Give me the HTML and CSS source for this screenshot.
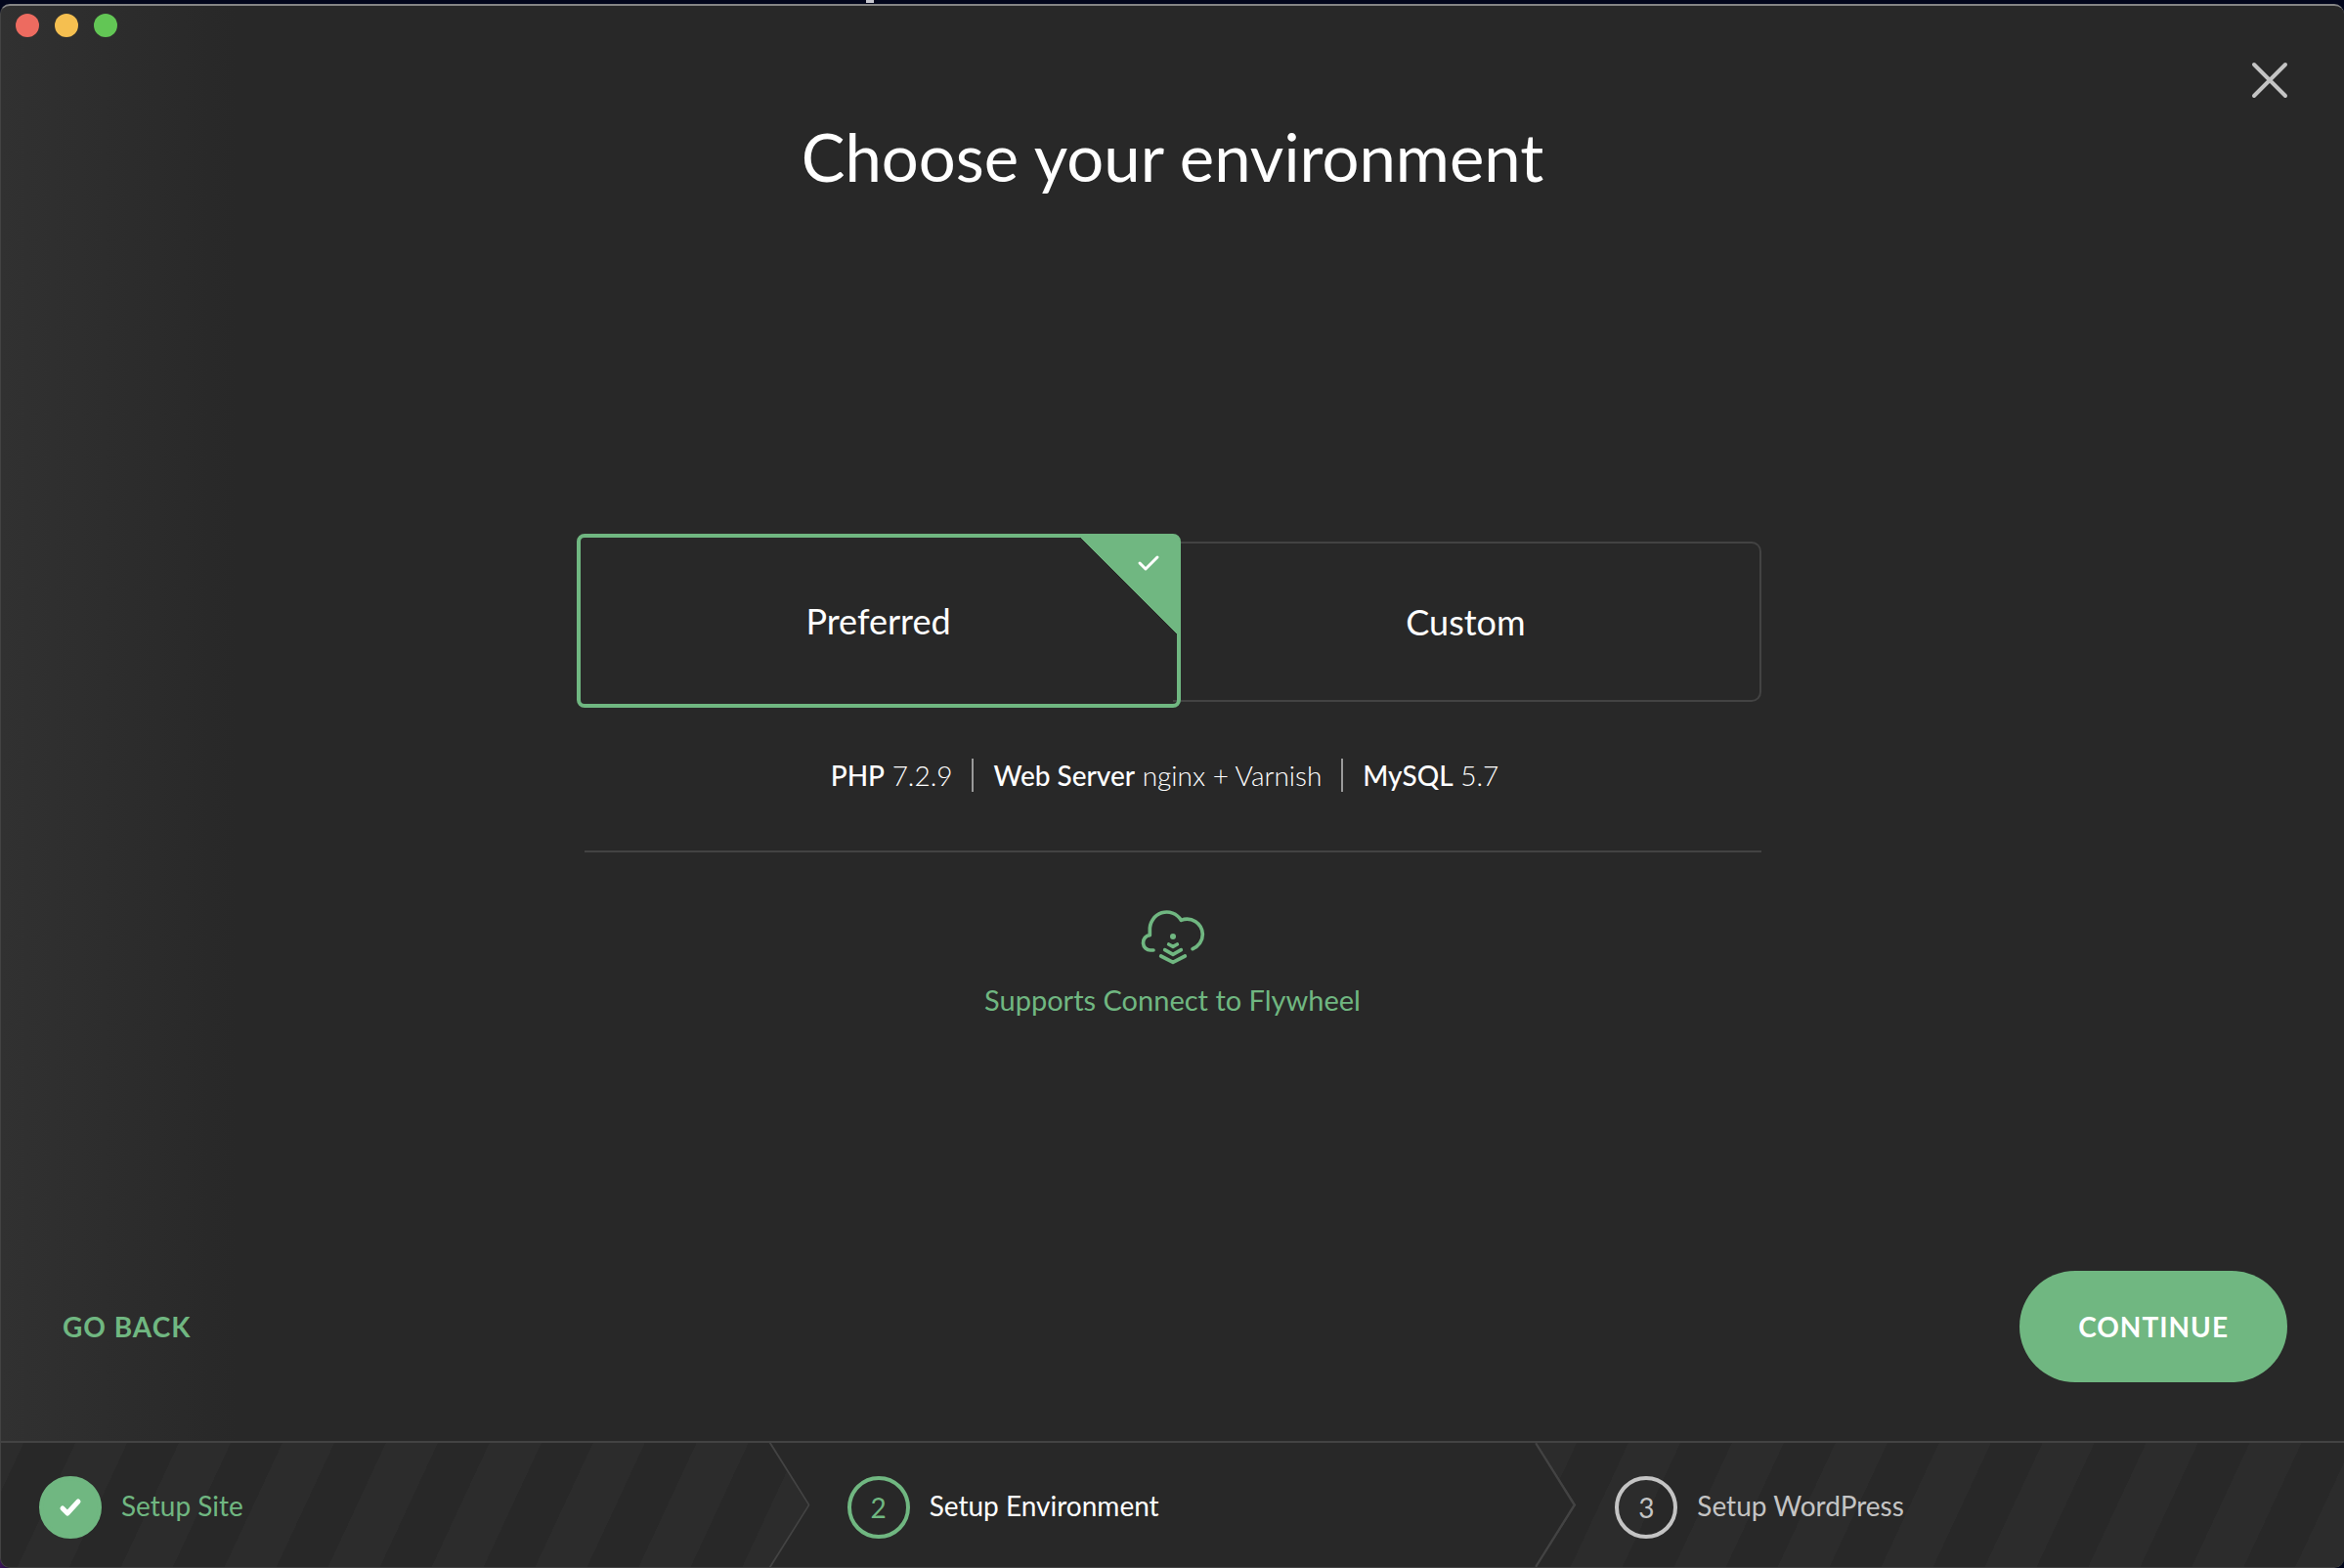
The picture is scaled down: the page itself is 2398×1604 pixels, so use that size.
FILE: index.html
```html
<!DOCTYPE html>
<html lang="en">
<head>
<meta charset="utf-8">
<meta name="viewport" content="width=device-width, initial-scale=1">
<title>Choose your environment</title>
<link rel="stylesheet" href="styles.css">
</head>
<body>
<div class="window">
  <header class="titlebar">
    <div class="lights">
      <button class="light light-close" type="button" aria-label="Close window"></button>
      <button class="light light-minimize" type="button" aria-label="Minimize window"></button>
      <button class="light light-zoom" type="button" aria-label="Zoom window"></button>
    </div>
    <button class="dismiss" type="button" aria-label="Close">
      <svg viewBox="0 0 36 36" width="36" height="36" aria-hidden="true"><path d="M2 2L34 34M34 2L2 34"/></svg>
    </button>
  </header>

  <h1 class="title">Choose your environment</h1>

  <main class="content">
    <form class="choices">
      <label class="choice choice-selected">
        <input class="choice-input" type="radio" name="environment" value="preferred" checked>
        <span>Preferred</span>
        <span class="flag">
          <svg viewBox="0 0 22 16" width="22" height="16" aria-hidden="true"><path d="M2 8L8 14L20 2"/></svg>
        </span>
      </label>
      <label class="choice">
        <input class="choice-input" type="radio" name="environment" value="custom">
        <span>Custom</span>
      </label>
    </form>

    <ul class="specs">
      <li><strong>PHP</strong> 7.2.9</li>
      <li><strong>Web Server</strong> nginx + Varnish</li>
      <li><strong>MySQL</strong> 5.7</li>
    </ul>

    <div class="support">
      <svg class="cloud" viewBox="0 0 192 162" width="64" height="54" aria-hidden="true">
        <path d="M36 120H28A22 23 0 0 1 25 74V59A52 53 0 0 1 121 28A48 48 0 0 1 187 71A48 48 0 0 1 156 116"/>
        <path d="M83 102L96 109L109 102M71 119L96 133L121 119M59 138L96 157L133 138"/>
        <circle cx="96" cy="78" r="9"/>
      </svg>
      <span>Supports Connect to Flywheel</span>
    </div>
  </main>

  <div class="actions">
    <button class="back" type="button">GO BACK</button>
    <button class="continue" type="button">CONTINUE</button>
  </div>

  <ol class="stepper">
    <li class="step step-done">
      <span class="badge">
        <svg viewBox="0 0 20 16" width="20" height="16" aria-hidden="true"><path d="M2 9L7 14L18 2"/></svg>
      </span>
      <span class="step-label">Setup Site</span>
    </li>
    <li class="step step-current">
      <span class="badge">2</span>
      <span class="step-label">Setup Environment</span>
      <svg class="chevron chevron-start" viewBox="0 0 41 128" aria-hidden="true"><path d="M0 0L40 64L0 128"/></svg>
      <svg class="chevron chevron-end" viewBox="0 0 41 128" aria-hidden="true"><path d="M0 0L40 64L0 128"/></svg>
    </li>
    <li class="step">
      <span class="badge">3</span>
      <span class="step-label">Setup WordPress</span>
    </li>
  </ol>
</div>
</body>
</html>
```
FILE: styles.css
```css
:root {
  --bg: #282828;
  --stripe: #2c2c2c;
  --line: #434343;
  --green: #70b781;
  --muted: #c4c4c4;
}

* {
  box-sizing: border-box;
}

body {
  margin: 0;
  padding-top: 4px;
  min-height: 100vh;
  display: flex;
  /* sliver of the desktop behind the window */
  background:
    linear-gradient(#c8c8d0, #c8c8d0) 886px 0 / 8px 3px no-repeat,
    linear-gradient(90deg, #3a1458, #02061c 20px) 0 100% / 100% 40px no-repeat,
    #02061c;
  color: #fff;
  font: 28px/34px Lato, "Open Sans", sans-serif;
}

button {
  margin: 0;
  padding: 0;
  border: 0;
  background: none;
  color: inherit;
  font: inherit;
  letter-spacing: inherit;
  cursor: pointer;
}

svg {
  display: block;
  overflow: visible;
  fill: none;
  stroke: currentColor;
  stroke-linecap: round;
  stroke-linejoin: round;
}

ul,
ol {
  margin: 0;
  padding: 0;
  list-style: none;
}

.window {
  flex: 1;
  display: flex;
  flex-direction: column;
  overflow: hidden;
  border: 1px solid var(--line);
  border-top: 2px solid #858585;
  border-right: 0;
  border-radius: 10px;
  background: linear-gradient(90deg, #313131, var(--bg) 240px);
}

.titlebar {
  display: flex;
  justify-content: space-between;
  padding: 8px 58px 0 15px;
}

.lights {
  display: flex;
  gap: 16px;
}

.light {
  width: 24px;
  height: 24px;
  border-radius: 50%;
}

.light-close {
  background: #ed6b60;
}

.light-minimize {
  background: #f5bf50;
}

.light-zoom {
  background: #62c655;
}

.dismiss {
  margin-top: 50px;
  color: var(--muted);
}

.dismiss svg {
  stroke-width: 4;
}

.title {
  margin: 22px 0 96px;
  font-size: 67px;
  font-weight: 400;
  line-height: 76px;
  text-align: center;
}

.content {
  flex: 1;
  align-self: center;
  width: 100%;
  max-width: 1204px;
  display: flex;
  flex-direction: column;
  justify-content: center;
}

.choices {
  display: grid;
  grid-template-columns: 1fr 1fr;
}

.choice {
  position: relative;
  display: flex;
  align-items: center;
  justify-content: center;
  height: 164px;
  border: 2px solid var(--line);
  border-left: 0;
  border-radius: 0 10px 10px 0;
  font-size: 36px;
  line-height: 44px;
  cursor: pointer;
}

.choice-selected {
  z-index: 1;
  height: 178px;
  margin: -8px;
  border: 4px solid var(--green);
  border-radius: 8px;
}

.choice-input {
  position: absolute;
  inset: 0;
  margin: 0;
  opacity: 0;
}

.flag {
  position: absolute;
  top: 0;
  right: 0;
  width: 98px;
  height: 98px;
  padding: 18px 18px 0 0;
  display: flex;
  justify-content: flex-end;
  background: linear-gradient(to top right, transparent 50%, var(--green) 50%);
}

.flag svg {
  stroke-width: 3;
}

.specs {
  display: flex;
  justify-content: center;
  padding: 58px 16px 60px 0;
  border-bottom: 2px solid var(--line);
  font-weight: 300;
}

.specs li {
  padding: 0 20px;
}

.specs li + li {
  border-left: 2px solid #9a9a9a;
}

.specs strong {
  font-weight: 500;
}

.support {
  display: flex;
  flex-direction: column;
  align-items: center;
  gap: 20px;
  padding-top: 60px;
  color: var(--green);
  font-size: 29px;
}

.cloud {
  stroke-width: 11;
}

.cloud circle {
  fill: currentColor;
  stroke: none;
}

.actions {
  display: flex;
  align-items: center;
  justify-content: space-between;
  padding: 0 58px 60px 63px;
  font-weight: 700;
  letter-spacing: 1px;
}

.back {
  color: var(--green);
}

.continue {
  height: 114px;
  padding: 0 60px;
  border-radius: 57px;
  background: var(--green);
}

.stepper {
  display: grid;
  grid-template-columns: 1fr 1fr 1fr;
  height: 129px;
  padding-right: 40px;
  border-top: 2px solid var(--line);
  background: repeating-linear-gradient(115deg, var(--stripe) 0 21px, var(--bg) 21px 69px, var(--stripe) 69px 96px);
}

.step {
  position: relative;
  display: flex;
  align-items: center;
  gap: 20px;
  padding: 5px 0 0 80px;
  color: var(--muted);
}

.step-done {
  padding-left: 39px;
  color: var(--green);
}

.step-current {
  margin-right: -40px;
  background: var(--bg);
  clip-path: polygon(0 0, calc(100% - 40px) 0, 100% 50%, calc(100% - 40px) 100%, 0 100%, 40px 50%);
  color: #fff;
}

.step-label {
  padding-bottom: 4px;
}

.badge {
  display: flex;
  align-items: center;
  justify-content: center;
  width: 64px;
  height: 64px;
  border: 4px solid currentColor;
  border-radius: 50%;
}

.step-done .badge {
  background: var(--green);
}

.step-done svg {
  color: #fff;
  stroke-width: 5;
}

.step-current .badge {
  border-color: var(--green);
  color: var(--green);
}

.chevron {
  position: absolute;
  top: 0;
  width: 41px;
  height: 100%;
  color: var(--line);
  stroke-width: 3;
}

.chevron-start {
  left: 0;
}

.chevron-end {
  right: 0;
  width: 40px;
}
```
